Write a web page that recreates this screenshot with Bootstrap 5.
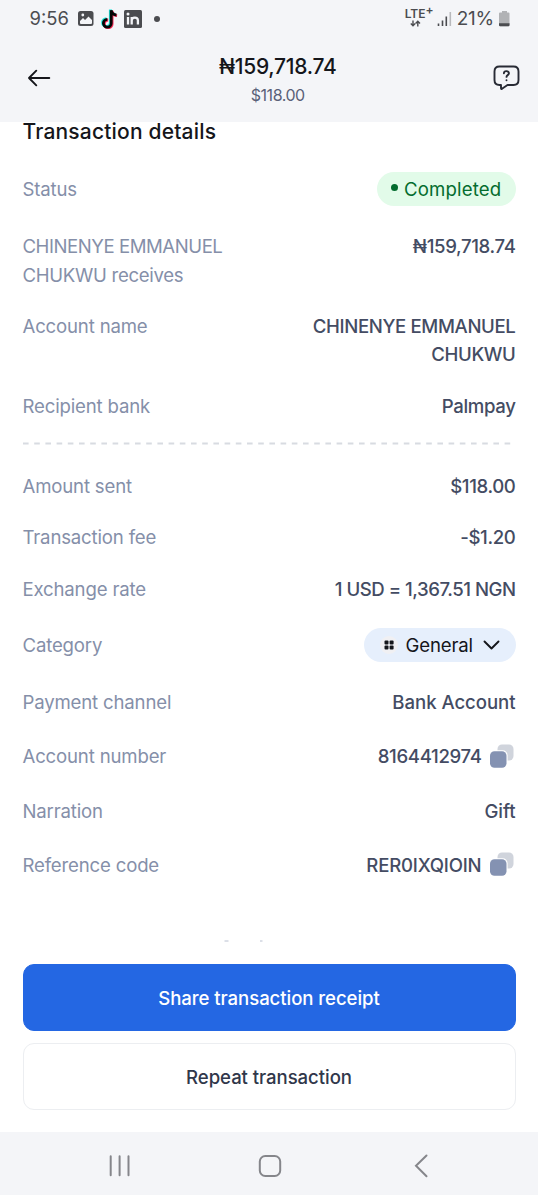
<!DOCTYPE html>
<html lang="en">
<head>
<meta charset="utf-8">
<meta name="viewport" content="width=device-width, initial-scale=1">
<title>Transaction details</title>
<link href="https://cdn.jsdelivr.net/npm/bootstrap@5.3.0/dist/css/bootstrap.min.css" rel="stylesheet">
<style>
  body { font-family: Inter, "Liberation Sans", sans-serif; font-size: 18.6px; line-height: 28.5px; color: #444c63; background: #fff; overflow: hidden; }
  svg { display: block; flex: none; }
  .screen { height: 1199px; }
  .top-area { height: 122px; background: #f4f5f8; }
  .status-bar { height: 37px; padding: 0 28px 0 29.5px; color: #4b4c50; }
  .clock { font-size: 18.4px; letter-spacing: 0; width: 48.5px; }
  .battery-pct { font-size: 19px; letter-spacing: -.2px; margin-left: 5px; padding-top: 1.5px; }
  .network { width: 30px; height: 22px; color: #4b4c50; }
  .network span { font-size: 12px; line-height: 12px; font-weight: 600; letter-spacing: 0; white-space: nowrap; }
  .network sup { font-size: 12px; top: -3px; line-height: 0; vertical-align: baseline; position: relative; }
  .app-bar { height: 85px; padding: 0 17.5px 4px 27px; }
  .headline { padding: 6px 0 0 11px; }
  .amount-main { font-size: 21px; line-height: 28px; font-weight: 500; color: #15161b; letter-spacing: -.25px; }
  .amount-sub { font-size: 16px; line-height: 28px; color: #5a6178; letter-spacing: -.45px; }
  .section-title { font-size: 21px; line-height: 20px; height: 36.4px; font-weight: 500; color: #15161b; letter-spacing: .18px; margin: 0; }
  .content-area { padding: 0 22.5px; height: 842px; margin-top: -.4px; }
  .item-row { height: 51.5px; }
  .row-status { height: 62px; }
  .row-double { height: 79.75px; padding-top: 11.2px; }
  .row-category { height: 60.5px; }
  .row-tall { height: 54.4px; }
  .item-label { color: #858fa9; letter-spacing: -.17px; padding-top: 1px; }
  .label-caps { letter-spacing: -.46px; }
  .label-mixed { letter-spacing: -.3px; }
  .item-value { font-weight: 500; text-align: right; letter-spacing: -.36px; padding-top: 1px; }
  .wide-text { letter-spacing: -.05px; }
  .rate-text { letter-spacing: -.48px; }
  .pill { height: 34px; border-radius: 17px; }
  .pill-done { width: 139px; background: #e2fbe9; color: #046c2e; padding-left: 14.5px; letter-spacing: .17px; }
  .pill-done i { width: 7px; height: 7px; border-radius: 50%; background: #046c2e; margin: -3px 6px 0 0; }
  .pill-cat { width: 152px; background: #e6effc; color: #15161b; padding-left: 16px; letter-spacing: -.15px; margin-top: 1px; }
  .pill-cat span { margin-left: 8px; padding-top: 1px; }
  .divider-box { height: 28.6px; padding-top: 11px; }
  .btn.action { height: 67px; border-radius: 11px; font-size: 18.6px; font-weight: 500; letter-spacing: -.07px; padding: 9px 12px 6px; }
  .btn.share { background: #2467e3; color: #fff; border: 1px solid #2467e3; }
  .btn.repeat { background: #fff; color: #30374a; border: 1px solid #eceef1; margin-top: 12px; }
  .actions { padding: 0 22.5px; height: 168px; }
  .nav-keys { height: 63px; background: #f4f5f8; }
</style>
</head>
<body>
<div class="screen d-flex flex-column">
  <header class="top-area">
    <div class="status-bar d-flex align-items-center">
      <span class="clock">9:56</span>
      <svg width="16" height="17" viewBox="0 0 16 17"><rect y="1" width="15.500" height="15" rx="2.500" fill="#4b4c50"/><path d="M2 13V11l3-3 2 2 3.500-3.500L14 10v3a1 1 0 0 1-1 1H3a1 1 0 0 1-1-1Z" fill="#f4f5f8"/><circle cx="4.800" cy="5" r="1.400" fill="#f4f5f8"/></svg>
      <svg style="margin-left:7px" width="17" height="20" viewBox="0 0 17 20"><g fill="none" stroke-width="2.800"><path d="M9.300.5v13a3.900 3.900 0 1 1-3.900-3.900M9.300.5c.3 3 2 4.500 5 4.800" stroke="#21e6dc"/><path d="M11.100 1.900v13a3.900 3.900 0 1 1-3.900-3.900M11.100 1.900c.3 3 2 4.500 5 4.800" stroke="#fb2b58"/><path d="M10.200 1.200v13a3.900 3.900 0 1 1-3.900-3.900M10.200 1.200c.3 3 2 4.500 5.200 4.800" stroke="#050505"/></g></svg>
      <svg style="margin-left:6px" width="18" height="18" viewBox="0 0 18 18"><rect width="18" height="18" rx="1.500" fill="#4b4c50"/><path d="M4 7v7.500M7.700 7v7.500M7.700 14.500v-4c0-3.500 6.200-4.200 6.200 0v4" fill="none" stroke="#f4f5f8" stroke-width="2.300"/><circle cx="4" cy="4" r="1.500" fill="#f4f5f8"/></svg>
      <svg style="margin-left:12px" width="6" height="6"><circle cx="3" cy="3" r="3" fill="#4b4c50"/></svg>
      <div class="d-flex align-items-center ms-auto">
        <div class="network d-flex flex-column"><span>LTE<sup>+</sup></span>
          <svg style="margin-left:5px" width="12" height="7" viewBox="0 0 12 7" fill="none" stroke="#4b4c50" stroke-width="1.400"><path d="M3 .5v5M.8 3.500 3 5.700l2.200-2.200M7.800 6.500v-5M5.600 3.500l2.200-2.200L10 3.500"/></svg>
        </div>
        <svg style="margin-left:2px" width="15" height="16" viewBox="0 0 15 16"><path d="M1.500 12.500V15M5.500 9.500V15M9.300 5.500V15" stroke="#4b4c50" stroke-width="1.600"/><path d="M13.300 1v14" stroke="#b8b9bc" stroke-width="1.600"/></svg>
        <span class="battery-pct">21%</span>
        <svg style="margin-left:5px" width="11" height="17" viewBox="0 0 11 17"><path d="M3 1h5v1.500h1.500q1 0 1 1V15q0 1.200-1.200 1.200H1.200Q0 16.200 0 15V3.500q0-1 1-1h2Z" fill="#b1b2b5"/><path d="M0 13.300h10.500V15q0 1.200-1.200 1.200H1.200Q0 16.200 0 15Z" fill="#4b4c50"/></svg>
      </div>
    </div>
    <div class="app-bar d-flex align-items-center justify-content-between">
      <svg width="24" height="18" viewBox="0 0 24 18" fill="none" stroke="#15161b" stroke-width="1.900" stroke-linecap="round" stroke-linejoin="round"><path d="M22.300 9H2M9.300 1.700 2 9l7.300 7.300"/></svg>
      <div class="headline text-center">
        <div class="amount-main">₦159,718.74</div>
        <div class="amount-sub">$118.00</div>
      </div>
      <svg width="27" height="26" viewBox="0 0 27 26" fill="none" stroke="#282b35" stroke-width="1.900" stroke-linecap="round" stroke-linejoin="round"><path d="M6.500 1.500h14q5 0 5 5v8.500q0 5-5 5h-6L9 23.800q-1 .5-1-.7V20H6.500q-5 0-5-5V6.500q0-5 5-5Z"/><path d="M10.900 8.200c.2-3 5.200-2.700 5 .2-.1 1.800-2.400 1.700-2.400 3.500M13.500 15.200v.1"/></svg>
    </div>
  </header>

  <main class="content-area">
    <h1 class="section-title">Transaction details</h1>
    <div class="item-row row-status d-flex align-items-center justify-content-between"><span class="item-label">Status</span><span class="pill pill-done d-flex align-items-center"><i></i>Completed</span></div>
    <div class="item-row row-double d-flex align-items-start justify-content-between"><span class="item-label"><span class="label-caps">CHINENYE EMMANUEL</span><br><span class="label-mixed">CHUKWU receives</span></span><span class="item-value">₦159,718.74</span></div>
    <div class="item-row row-double d-flex align-items-start justify-content-between"><span class="item-label">Account name</span><span class="item-value">CHINENYE EMMANUEL<br>CHUKWU</span></div>
    <div class="item-row d-flex align-items-center justify-content-between"><span class="item-label">Recipient bank</span><span class="item-value">Palmpay</span></div>
    <div class="divider-box"><svg width="493" height="3"><path d="M0 1.500h488" stroke="#d8dbe1" stroke-width="1.900" stroke-dasharray="5.600 5.600"/></svg></div>
    <div class="item-row d-flex align-items-center justify-content-between"><span class="item-label">Amount sent</span><span class="item-value">$118.00</span></div>
    <div class="item-row d-flex align-items-center justify-content-between"><span class="item-label">Transaction fee</span><span class="item-value">-$1.20</span></div>
    <div class="item-row d-flex align-items-center justify-content-between"><span class="item-label">Exchange rate</span><span class="item-value rate-text">1 USD = 1,367.51 NGN</span></div>
    <div class="item-row row-category d-flex align-items-center justify-content-between"><span class="item-label">Category</span>
      <span class="pill pill-cat d-flex align-items-center"><svg width="18" height="20" viewBox="0 0 18 20"><circle cx="9" cy="10" r="9" fill="#f0f0f3"/><g fill="#15161b"><rect x="4.500" y="5.500" width="4" height="4" rx="1"/><rect x="9.600" y="5.500" width="4" height="4" rx="1"/><rect x="4.500" y="10.600" width="4" height="4" rx="1"/><rect x="9.600" y="10.600" width="4" height="4" rx="1"/></g></svg><span>General</span><svg class="ms-auto me-3" width="17" height="10" viewBox="0 0 17 10" fill="none" stroke="#15161b" stroke-width="1.900" stroke-linecap="round" stroke-linejoin="round"><path d="m1.500 1.500 7 7 7-7"/></svg></span></div>
    <div class="item-row row-tall d-flex align-items-center justify-content-between"><span class="item-label">Payment channel</span><span class="item-value wide-text">Bank Account</span></div>
    <div class="item-row row-tall d-flex align-items-center justify-content-between"><span class="item-label">Account number</span><span class="item-value d-flex align-items-center gap-2">8164412974<svg width="26" height="26" viewBox="0 0 26 26"><rect x="7.500" y=".5" width="16" height="16" rx="4.500" fill="#d0d4dc"/><rect x="-.8" y="6.200" width="18.400" height="18.400" rx="5" fill="#fff"/><rect x="0" y="7.300" width="16.500" height="16.500" rx="4.500" fill="#8492b2"/></svg></span></div>
    <div class="item-row row-tall d-flex align-items-center justify-content-between"><span class="item-label">Narration</span><span class="item-value wide-text">Gift</span></div>
    <div class="item-row row-tall d-flex align-items-center justify-content-between"><span class="item-label">Reference code</span><span class="item-value d-flex align-items-center gap-2"><span style="letter-spacing:-.2px">RER0IXQIOIN</span><svg width="26" height="26" viewBox="0 0 26 26"><rect x="7.500" y=".5" width="16" height="16" rx="4.500" fill="#d0d4dc"/><rect x="-.8" y="6.200" width="18.400" height="18.400" rx="5" fill="#fff"/><rect x="0" y="7.300" width="16.500" height="16.500" rx="4.500" fill="#8492b2"/></svg></span></div>
    <svg style="margin:46.500px 0 0 200px" width="44" height="4"><path d="M1.500 2h4M37 2h2.500" stroke="#b9c0d0" stroke-width="1"/></svg>
  </main>

  <div class="actions d-flex flex-column">
    <button class="btn action share w-100" type="button">Share transaction receipt</button>
    <button class="btn action repeat w-100" type="button">Repeat transaction</button>
  </div>

  <nav class="nav-keys d-flex align-items-center" aria-label="System navigation">
    <svg class="w-100" height="63" viewBox="0 0 538 63" fill="none" stroke="#85868b" stroke-width="2" stroke-linecap="round"><path d="M110.700 24.300v19M119.600 24.300v19M128.500 24.300v19"/><rect x="259.800" y="24" width="20.400" height="20" rx="5.500"/><path d="m426.500 23.500-10.500 10.300 10.500 10.400"/></svg>
  </nav>
</div>
<script src="https://cdn.jsdelivr.net/npm/bootstrap@5.3.0/dist/js/bootstrap.bundle.min.js"></script>
</body>
</html>
